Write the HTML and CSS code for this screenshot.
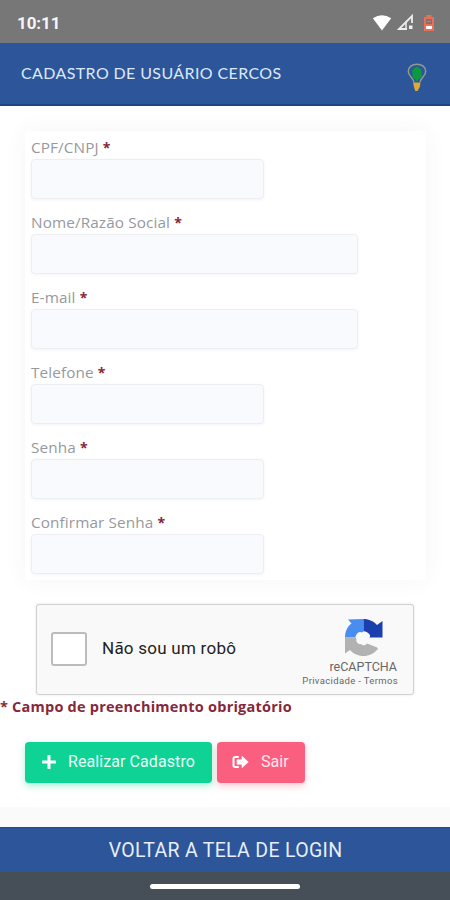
FILE: index.html
```html
<!DOCTYPE html>
<html lang="pt-BR">
<head>
<meta charset="utf-8">
<meta name="viewport" content="width=device-width, initial-scale=1">
<title>Cadastro de Usuário</title>
<link rel="stylesheet" href="styles.css">
</head>
<body>
<div class="status">
  <span class="clock">10:11</span>
  <div class="status-icons">
    <svg width="20" height="16" viewBox="0 0 20 16"><path d="M.8 3.2Q10-2.8 19.2 3.2L10 15.5z" fill="#fff"/></svg>
    <svg width="17" height="17" viewBox="0 0 17 17"><path d="M15 9V2L2 15h8" fill="none" stroke="#eee" stroke-width="1.8"/><path d="M9 8v7" stroke="#eee" stroke-width="1.500"/><path d="M12 11.500h3.500V15H12z" fill="#eee"/></svg>
    <svg width="12" height="16" viewBox="0 0 12 16"><path d="M3.5 0h5v2H11v14H1V2h2.500z" fill="#e8705a"/><path d="M3 4h6v5H3z" fill="#8a6d66"/><path d="M3 11h6v3H3z" fill="#fff"/><path d="M4 6.500h4" stroke="#e8705a"/></svg>
  </div>
</div>
<header class="header">
  <h1 class="title">CADASTRO DE USUÁRIO CERCOS</h1>
  <svg class="bulb" width="20" height="29" viewBox="0 0 20 29"><path d="M7 19C6 14 1.300 13.500 1.300 8.500C1.300 4 5 1.200 10 1.200s8.700 2.800 8.700 7.300c0 5-4.700 5.500-5.700 10.500" fill="none" stroke="#8f9b8c" stroke-width="1.500"/><path d="M10 3.500L12 5l2.500 1.500v4l.5 3-2.500 2L10 18.500l-2-2.500-2.500-2V11l-.5-3.500L7.500 5z" fill="#0c9a3e"/><path d="M6 19.500h7.500l-.7 4.500-2.300 4H8.300L7 24z" fill="#e0a935"/></svg>
</header>
<main class="page">
  <form class="card">
    <label class="field"><span class="label">CPF/CNPJ <b>*</b></span><input class="input"></label>
    <label class="field"><span class="label">Nome/Razão Social <b>*</b></span><input class="input wide"></label>
    <label class="field"><span class="label">E-mail <b>*</b></span><input class="input wide"></label>
    <label class="field"><span class="label">Telefone <b>*</b></span><input class="input"></label>
    <label class="field"><span class="label">Senha <b>*</b></span><input class="input"></label>
    <label class="field"><span class="label">Confirmar Senha <b>*</b></span><input class="input"></label>
  </form>
  <section class="captcha">
    <span class="check"></span>
    <span class="robot">Não sou um robô</span>
    <div class="brand">
      <svg width="38" height="37" viewBox="0 0 38 37"><path d="M18.500 0v18.500H0C0 12 3 7 6.500 4.500L3 .5z" fill="#4a8df0"/><path d="M18.500 0C24 0 29 2.500 32 6l5.500-4v16.500h-19z" fill="#1c3fae"/><path d="M0 18.500h24L33 30C29 34.500 24 37 18.500 37 13 37 8 34.500 5 31l-5 3.500z" fill="#b2b2b2"/><path d="M17 13.500a4 4 0 0 1 6 .5 3.700 3.700 0 0 1 1.500 5L35 27l-4 1-9-3.500a3.700 3.700 0 0 1-6 .5 3.800 3.800 0 0 1-4.500-5 3.500 3.500 0 0 1 0-4.500 3.800 3.800 0 0 1 5.500-2z" fill="#f9f9f9"/></svg>
      <span class="recaptcha">reCAPTCHA</span>
      <span class="terms">Privacidade - Termos</span>
    </div>
  </section>
  <p class="note">* Campo de preenchimento obrigatório</p>
  <div class="actions">
    <button class="btn save"><svg width="14" height="14" viewBox="0 0 14 14"><path d="M7 1v12M1 7h12" stroke="#fff" stroke-width="3" stroke-linecap="round"/></svg><span>Realizar Cadastro</span></button>
    <button class="btn exit"><svg width="17" height="14" viewBox="0 0 17 14"><path d="M6 2H3.200Q1.500 2 1.500 3.700v6.600Q1.500 12 3.200 12H6" fill="none" stroke="#fff" stroke-width="2" stroke-linecap="round"/><path d="M10 1.200L16.300 7 10 12.800V9.300H5V4.700h5z" fill="#fff" stroke="#fff" stroke-width=".6" stroke-linejoin="round"/></svg><span>Sair</span></button>
  </div>
</main>
<div class="band"></div>
<a class="back">VOLTAR A TELA DE LOGIN</a>
<div class="nav"><span class="handle"></span></div>
</body>
</html>
```
FILE: styles.css
```css
* { box-sizing: border-box; }
body { margin: 0; width: 450px; height: 900px; overflow: hidden; display: flex; flex-direction: column; background: #fff; font-family: "Open Sans", sans-serif; }
.status { height: 43px; flex: none; background: #777; display: flex; align-items: center; justify-content: space-between; padding: 2px 15px 0 17px; }
.clock { font: 700 17px/20px Roboto, sans-serif; color: #f5f5f5; letter-spacing: -.1px; }
.status-icons { display: flex; align-items: center; gap: 5px; }
.status-icons svg:last-child { margin-left: 4px; }
.header { height: 63px; flex: none; background: #2d5599; border-bottom: 2px solid #1e4584; display: flex; align-items: center; justify-content: space-between; padding: 0 23px 0 21px; }
.title { margin: -2px 0 0; font: 400 16px/20px Lato, sans-serif; color: #dce9fa; letter-spacing: .38px; white-space: nowrap; }
.bulb { margin-top: 7px; }
.page { height: 701px; flex: none; padding-top: 25px; display: flex; flex-direction: column; }
.card { width: 401px; height: 449px; margin-left: 25px; padding: 6px 6px 0; background: #fff; border-radius: 4px; box-shadow: 0 0 22px rgba(60, 70, 70, .055); flex: none; }
.field { display: block; height: 75px; }
.label { display: block; height: 22px; font: 400 15.3px/20px "Open Sans", sans-serif; color: #96999e; white-space: nowrap; letter-spacing: .12px; }
.label b { color: #85263b; font-size: 14px; }
.input { display: block; width: 233px; height: 40px; border: 1px solid #eceff1; border-radius: 4px; background: #f9fafd; box-shadow: 0 1px 3px rgba(80, 100, 120, .07); padding: 0 8px; outline: none; }
.wide { width: 327px; }
.captcha { width: 378px; height: 91px; margin: 24px 0 0 36px; border: 1px solid #d1d1d1; border-radius: 3px; background: #f9f9f9; box-shadow: 0 0 3px rgba(0, 0, 0, .1); display: flex; align-items: center; padding-left: 14px; flex: none; }
.check { width: 36px; height: 34px; border: 2px solid #bcbcbc; border-radius: 3px; background: #fff; margin-bottom: 2px; }
.robot { margin: -3px 0 0 15px; font: 400 17px/22px Roboto, sans-serif; color: #222; white-space: nowrap; letter-spacing: .25px; }
.brand { margin-left: auto; width: 97px; margin-right: 15px; display: flex; flex-direction: column; align-items: flex-end; padding-top: 8px; color: #666; font-family: Roboto, sans-serif; }
.brand svg { margin-right: 15px; }
.recaptcha { font-size: 12.5px; line-height: 14px; margin: 4px 1px 0 0; white-space: nowrap; }
.terms { font-size: 9.5px; line-height: 14px; white-space: nowrap; letter-spacing: .35px; }
.note { margin: 2px 0 0; height: 20px; font: 700 14.500px/20px "Open Sans", sans-serif; color: #86283a; white-space: nowrap; letter-spacing: .22px; }
.actions { display: flex; gap: 5px; margin: 25px 0 0 25px; }
.btn { height: 41px; border: 0; border-radius: 4px; color: #e9fff7; font: 400 16px/20px Roboto, sans-serif; letter-spacing: .08px; display: flex; align-items: center; gap: 12px; white-space: nowrap; padding: 0 0 1px 17px; }
.save { width: 187px; background: #0fd295; box-shadow: 0 3px 7px rgba(15, 210, 149, .35); }
.exit { width: 88px; background: #fb5f80; box-shadow: 0 3px 7px rgba(251, 95, 128, .35); color: #ffe8ed; padding-left: 15px; }
.band { height: 20px; flex: none; background: #fafafa; }
.back { height: 45px; flex: none; background: #2d5599; border-top: 1px solid #244a87; color: #e6effb; display: flex; align-items: center; justify-content: center; font: 400 19.500px/24px Roboto, sans-serif; letter-spacing: .32px; padding: 2px 0 0 1px; white-space: nowrap; }
.nav { height: 28px; flex: none; background: #464e57; display: flex; justify-content: center; align-items: center; }
.handle { width: 150px; height: 5px; border-radius: 3px; background: #fff; }
```
